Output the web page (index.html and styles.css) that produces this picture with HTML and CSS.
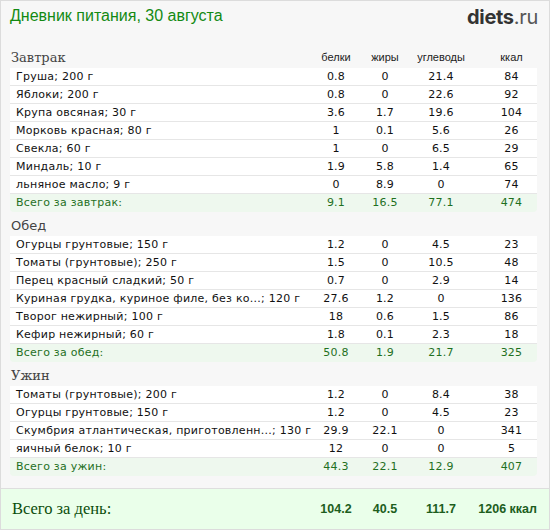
FILE: index.html
```html
<!DOCTYPE html>
<html lang="ru">
<head>
<meta charset="utf-8">
<title>Дневник питания</title>
<link rel="stylesheet" href="styles.css">
</head>
<body>
<div class="page">
  <div class="header">
    <div class="title">Дневник питания, 30 августа</div>
    <div class="logo"><span class="logo-main">diets</span><span class="logo-tld">.ru</span></div>
  </div>

  <div class="meal">
    <div class="meal-head">
      <div class="meal-name serif">Завтрак</div>
      <div class="col-label">белки</div>
      <div class="col-label">жиры</div>
      <div class="col-label">углеводы</div>
      <div></div>
      <div class="col-label">ккал</div>
    </div>
    <div class="row"><div class="name">Груша; 200 г</div><div>0.8</div><div>0</div><div>21.4</div><div></div><div>84</div></div>
    <div class="row"><div class="name">Яблоки; 200 г</div><div>0.8</div><div>0</div><div>22.6</div><div></div><div>92</div></div>
    <div class="row"><div class="name">Крупа овсяная; 30 г</div><div>3.6</div><div>1.7</div><div>19.6</div><div></div><div>104</div></div>
    <div class="row"><div class="name">Морковь красная; 80 г</div><div>1</div><div>0.1</div><div>5.6</div><div></div><div>26</div></div>
    <div class="row"><div class="name">Свекла; 60 г</div><div>1</div><div>0</div><div>6.5</div><div></div><div>29</div></div>
    <div class="row"><div class="name">Миндаль; 10 г</div><div>1.9</div><div>5.8</div><div>1.4</div><div></div><div>65</div></div>
    <div class="row"><div class="name">льняное масло; 9 г</div><div>0</div><div>8.9</div><div>0</div><div></div><div>74</div></div>
    <div class="row total"><div class="name">Всего за завтрак:</div><div>9.1</div><div>16.5</div><div>77.1</div><div></div><div>474</div></div>
  </div>

  <div class="meal">
    <div class="meal-head">
      <div class="meal-name sans">Обед</div>
    </div>
    <div class="row"><div class="name">Огурцы грунтовые; 150 г</div><div>1.2</div><div>0</div><div>4.5</div><div></div><div>23</div></div>
    <div class="row"><div class="name">Томаты (грунтовые); 250 г</div><div>1.5</div><div>0</div><div>10.5</div><div></div><div>48</div></div>
    <div class="row"><div class="name">Перец красный сладкий; 50 г</div><div>0.7</div><div>0</div><div>2.9</div><div></div><div>14</div></div>
    <div class="row"><div class="name">Куриная грудка, куриное филе, без ко...; 120 г</div><div>27.6</div><div>1.2</div><div>0</div><div></div><div>136</div></div>
    <div class="row"><div class="name">Творог нежирный; 100 г</div><div>18</div><div>0.6</div><div>1.5</div><div></div><div>86</div></div>
    <div class="row"><div class="name">Кефир нежирный; 60 г</div><div>1.8</div><div>0.1</div><div>2.3</div><div></div><div>18</div></div>
    <div class="row total"><div class="name">Всего за обед:</div><div>50.8</div><div>1.9</div><div>21.7</div><div></div><div>325</div></div>
  </div>

  <div class="meal">
    <div class="meal-head">
      <div class="meal-name serif">Ужин</div>
    </div>
    <div class="row"><div class="name">Томаты (грунтовые); 200 г</div><div>1.2</div><div>0</div><div>8.4</div><div></div><div>38</div></div>
    <div class="row"><div class="name">Огурцы грунтовые; 150 г</div><div>1.2</div><div>0</div><div>4.5</div><div></div><div>23</div></div>
    <div class="row"><div class="name">Скумбрия атлантическая, приготовленн...; 130 г</div><div>29.9</div><div>22.1</div><div>0</div><div></div><div>341</div></div>
    <div class="row"><div class="name">яичный белок; 10 г</div><div>12</div><div>0</div><div>0</div><div></div><div>5</div></div>
    <div class="row total"><div class="name">Всего за ужин:</div><div>44.3</div><div>22.1</div><div>12.9</div><div></div><div>407</div></div>
  </div>

  <div class="footer">
    <div class="footer-grid">
      <div class="footer-label">Всего за день:</div>
      <div class="fnum">104.2</div>
      <div class="fnum">40.5</div>
      <div class="fnum">111.7</div>
      <div class="fnum fkcal">1206 ккал</div>
    </div>
  </div>
</div>
</body>
</html>
```

FILE: styles.css
```css
html, body {
  margin: 0;
  padding: 0;
  background: #ffffff;
}

.page {
  box-sizing: border-box;
  width: 550px;
  height: 530px;
  border: 1px solid #dcdcdc;
  background: #f7f7f7;
  display: flex;
  flex-direction: column;
  overflow: hidden;
}

.header {
  display: flex;
  justify-content: space-between;
  align-items: flex-start;
  height: 39px;
  padding: 4px 11px 0 9px;
}

.title {
  font-family: "Liberation Sans", Arial, sans-serif;
  font-size: 16px;
  line-height: 22px;
  color: #138a13;
}

.logo {
  font-family: Inter, "Open Sans", sans-serif;
  font-size: 20px;
  line-height: 24px;
  letter-spacing: -0.3px;
}

.logo-main {
  font-weight: 700;
  color: #333333;
}

.logo-tld {
  font-weight: 400;
  color: #555555;
}

.meal {
  margin: 0 12px 0 9px;
}

.meal-head,
.row,
.footer-grid {
  display: grid;
  grid-template-columns: 302px 48px 50px 62px 14px 51px;
}

.meal-head {
  height: 24px;
  align-items: end;
}

.meal-name {
  font-size: 13px;
  line-height: 17px;
  padding-bottom: 2px;
  padding-left: 1px;
  color: #444444;
}

.serif {
  font-family: "DejaVu Serif", serif;
}

.sans {
  font-family: "DejaVu Sans", sans-serif;
}

.col-label {
  font-family: "Liberation Sans", Arial, sans-serif;
  font-size: 11px;
  line-height: 17px;
  padding-bottom: 2px;
  text-align: center;
  color: #222222;
}

.row {
  height: 17px;
  border-bottom: 1px solid #e6e6e6;
  background: #ffffff;
  font-family: "DejaVu Sans", Verdana, sans-serif;
  font-size: 11px;
  line-height: 17px;
  letter-spacing: 0.25px;
  color: #111111;
  text-align: center;
}

.row .name {
  text-align: left;
  padding-left: 6px;
  white-space: nowrap;
}

.row.total {
  height: 18px;
  border-bottom: none;
  background: #eef8ee;
  color: #1f701f;
  border-radius: 0 0 4px 4px;
}

.footer {
  margin-top: auto;
  height: 40px;
  border-top: 1px solid #dedede;
  background: #eaffea;
  padding: 0 12px 0 9px;
  display: flex;
  align-items: center;
}

.footer-grid {
  width: 527px;
  align-items: center;
}

.footer-label {
  font-family: "Liberation Serif", "Times New Roman", serif;
  font-size: 16.5px;
  line-height: 20px;
  padding-left: 2px;
  color: #0b4d0b;
}

.fnum {
  font-family: "Liberation Sans", Arial, sans-serif;
  font-weight: 700;
  font-size: 12.5px;
  line-height: 20px;
  text-align: center;
  color: #1d5e1d;
}

.fkcal {
  grid-column: 5 / 7;
  text-align: right;
}
```
